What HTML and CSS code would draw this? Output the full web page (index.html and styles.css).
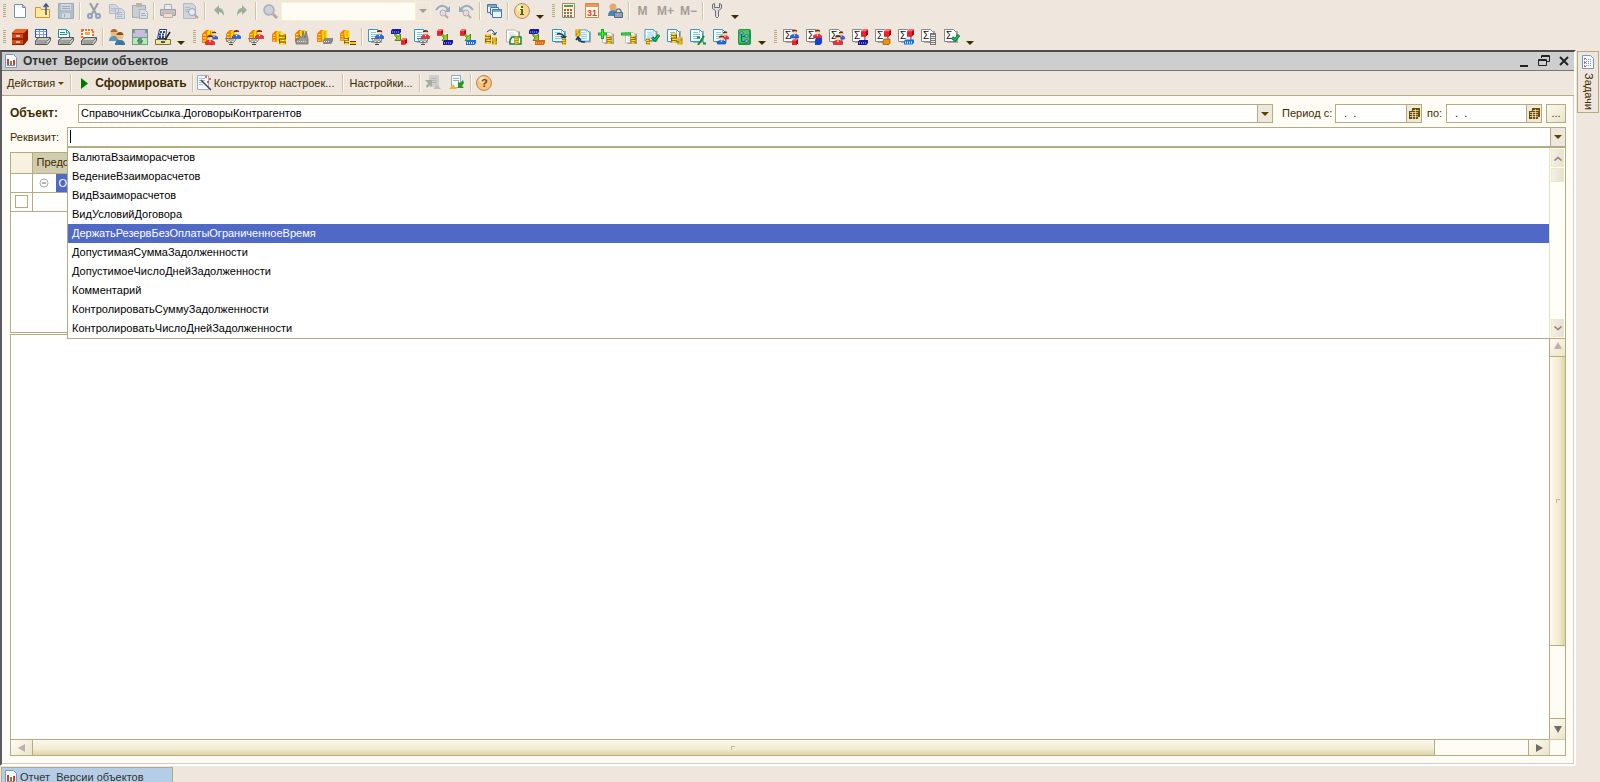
FILE: index.html
```html
<!DOCTYPE html>
<html lang="ru">
    <head>
        <meta charset="UTF-8" />
        <meta name="viewport" content="width=device-width, initial-scale=1.0" />
        <title>Отчет Версии объектов</title>
        <link rel="stylesheet" href="styles.css">
    </head>
    <body>
        <!-- shared icon parts -->
        <svg class="sprite" aria-hidden="true">
            <symbol id="ledger" viewBox="0 0 12 14">
                <path fill="#f08000" d="M0 5 4 1h7v9l-5 4H0z" />
                <path fill="#ffd800" d="M5 3 7 1h4v9l-5 4z" />
                <path stroke="#ffe880" d="M1 6h3M1 9h3M1 12h3" />
                <path stroke="#e09000" fill="none" d="M8.500 2v10" />
            </symbol>
            <symbol id="man-red" viewBox="0 0 10 10">
                <circle cx="5" cy="3" r="2.500" fill="#ffd8b0" />
                <path fill="#6b2a10" d="M2 2.500Q2 0 5 0t3 2.500L6 2z" />
                <path fill="#f03038" stroke="#b00818" stroke-width=".6" d="M0.500 9.500V7L3 5.500h4L9.500 7v2.500z" />
                <path fill="#fff" d="M4 5.500h2L5 7.500z" />
            </symbol>
            <symbol id="man-blue" viewBox="0 0 10 10">
                <circle cx="5" cy="3" r="2.500" fill="#ffd8b0" />
                <path fill="#6b2a10" d="M2 2.500Q2 0 5 0t3 2.500L6 2z" />
                <path fill="#2868e8" stroke="#0a2a9a" stroke-width=".6" d="M0.500 9.500V7L3 5.500h4L9.500 7v2.500z" />
                <path fill="#fff" d="M4 5.500h2L5 7.500z" />
            </symbol>
            <symbol id="basket" viewBox="0 0 12 7">
                <path fill="#f4f4f4" stroke="#555" stroke-width=".8" d="M.5.5h11l-3 4H3.500z" />
                <path stroke="#666" stroke-width=".6" fill="none" d="M3 1l4 3M6 1l3 2M9 1 5 4M6 1 3 3M6 4.500v2" />
                <path stroke="#444" d="M4 6.500h4" />
            </symbol>
            <symbol id="coins" viewBox="0 0 7 12">
                <path fill="#6a4c00" d="M0 1h7v10H0z" />
                <path stroke="#ffc810" stroke-width="2" d="M.5 1.500h6M0 4.500h6M1 7.500h6M.5 10.500h6" />
                <path stroke="#fff4a0" d="M2 1.500h2M1 4.500h2M3 7.500h2M2 10.500h2" />
            </symbol>
            <symbol id="paper" viewBox="0 0 14 14">
                <path fill="#aaa" d="M3 2h11v12H3z" />
                <path fill="#fff" stroke="#2a9cc8" d="M.5.5h9l3 3v9H.5z" />
                <path stroke="#80c8e4" d="M3 3.500h5M3 5.500h7M3 7.500h7M3 9.500h7M9.500 1v3" />
            </symbol>
            <symbol id="paper-gray" viewBox="0 0 14 14">
                <path fill="#999" d="M3 2h11v12H3z" />
                <path fill="#fff" stroke="#b4b4b4" d="M.5.5h9l3 3v9H.5z" />
                <path stroke="#ccc" d="M3 3.500h5M3 5.500h7M3 7.500h7M3 9.500h7" />
            </symbol>
            <symbol id="cube" viewBox="0 0 7 7">
                <path fill="#b00010" d="M0 2 2 0h5v5L5 7H0z" />
                <path fill="#f02028" d="M0 2h5v5H0z" />
                <path fill="#ff7070" d="M0 2 2 0h5L5 2z" />
            </symbol>
            <symbol id="shelf-blue" viewBox="0 0 10 5">
                <path fill="#1818a0" d="M0 1.500 1.500 0H10v3L8.500 5H0z" />
                <path stroke="#c0d0ff" stroke-dasharray="1 1" d="M1 3h7" />
            </symbol>
            <symbol id="shelf-light" viewBox="0 0 10 5">
                <path fill="#1870d8" d="M0 1.500 1.500 0H10v3L8.500 5H0z" />
                <path stroke="#d8f0ff" stroke-width="2" stroke-dasharray="1 1" d="M1 3h7" />
            </symbol>
            <symbol id="shelf-orange" viewBox="0 0 10 5">
                <path fill="#d86818" d="M0 1.500 1.500 0H10v3L8.500 5H0z" />
                <path stroke="#ffd0a0" stroke-dasharray="1 1" d="M1 3h7" />
            </symbol>
            <symbol id="arrow" viewBox="0 0 8 8">
                <path fill="#9ad020" stroke="#3c7000" stroke-width=".8" d="M1 .5 4 3.500 6.500 1v6.500H1L3 5 .5 2z" />
            </symbol>
            <symbol id="printer" viewBox="0 0 16 8">
                <path fill="#c8c8c8" stroke="#555" d="M.5 3.500 4 .5h11.500v3l-3 4H.5z" />
                <path stroke="#777" d="M1 4h11l3-3M2 6h9" fill="none" />
                <path stroke="#48b848" d="M10 5.500h2" />
            </symbol>
            <symbol id="sigma" viewBox="0 0 14 14">
                <path fill="#aaa" d="M3 2h11v12H3z" />
                <path fill="#fff" stroke="#888" d="M.5.500h9l3 3v9H.5z" />
                <text x="2" y="10" font-size="10" fill="#111">Σ</text>
            </symbol>
            <symbol id="check" viewBox="0 0 9 8">
                <path fill="none" stroke="#007038" stroke-width="3" d="M1 3.500 4 6l4-5" />
                <path fill="none" stroke="#10c060" stroke-width="1.500" d="M1 3.500 4 6l4-5" />
            </symbol>
            <symbol id="report" viewBox="0 0 12 14">
                <path fill="#f4faff" stroke="#7898b8" d="M.5.5h8l3 3v10H.5z" />
                <path fill="#e83030" d="M2 5h2v6H2z" />
                <path fill="#38a838" d="M5 7h2v4H5z" />
                <path fill="#e83030" d="M8 6h2v5H8z" />
                <path stroke="#7898b8" d="M2 11.500h8" />
            </symbol>
            <symbol id="calendar" viewBox="0 0 11 11">
                <path fill="#6b4e00" d="M3 0h8v9H9v2H0V3h3z" />
                <path stroke="#f4e8c8" d="M1 4.500h8M1 6.500h8M1 8.500h8M4 2.500h6M3.500 4v7M6.500 1v10" stroke-width=".7" />
            </symbol>
        </svg>

        <header class="toolbars">
            <div class="toolbar" role="toolbar" aria-label="Стандартная">
                <span class="grip"></span>
                <button class="tool" aria-label="Новый"><svg viewBox="0 0 16 16"><path fill="#fdfeff" stroke="#7890a8" d="M2.500 1.500h8l3 3v10h-11z" /><path fill="#c8dcf0" stroke="#7890a8" d="M10.500 1.500v3h3z" /></svg></button>
                <button class="tool" aria-label="Открыть"><svg viewBox="0 0 16 16"><path fill="#ffe8a0" stroke="#c89838" d="M.5 4.500h5l1 2h8v8H.5z" /><path fill="none" stroke="#385878" stroke-width="1.500" d="M11 12V2M8.500 4 11 1l2.500 3" /></svg></button>
                <button class="tool" aria-label="Сохранить" disabled><svg viewBox="0 0 16 16"><path fill="#9db0c4" stroke="#7f96ae" d="M.5.500h15v15H.5z" /><path fill="#c8d4e0" d="M3 1h10v6H3zM4 10h8v5H4z" /><path stroke="#7f96ae" d="M4 3.500h8M4 5.500h8M6.500 11v3" /></svg></button>
                <span class="sep"></span>
                <button class="tool" aria-label="Вырезать" disabled><svg viewBox="0 0 16 16"><path stroke="#788898" stroke-width="2" d="M4 0l6 11M12 0 6 11" /><g fill="none" stroke="#6888b8" stroke-width="2"><circle cx="4" cy="13" r="2" /><circle cx="12" cy="13" r="2" /></g></svg></button>
                <button class="tool" aria-label="Копировать" disabled><svg viewBox="0 0 16 16"><path fill="#c8d4e2" stroke="#9cacc4" d="M.5 1.500h6l3 3v6h-9zM6.500 5.500h6l3 3v7h-9z" /><path stroke="#9cacc4" d="M2 5.500h5M2 7.500h4M8 9.500h5M8 11.500h5M8 13.500h5" /></svg></button>
                <button class="tool" aria-label="Вставить" disabled><svg viewBox="0 0 16 16"><path fill="#bcc8d0" stroke="#8c98a8" d="M.5 2.500h13v12H.5z" /><path fill="#a8a890" d="M4 0h6v4H4z" /><path fill="#d4dce8" stroke="#8ca0b8" d="M7.500 6.500h5l3 3v6h-8z" /><path stroke="#8ca0b8" d="M9 10.500h4M9 12.500h5" /></svg></button>
                <span class="sep"></span>
                <button class="tool" aria-label="Печать" disabled><svg viewBox="0 0 16 16"><path fill="#e8ecf0" stroke="#8c98b0" d="M4.500 1.500h7v5h-7z" /><path fill="#b8b4b8" stroke="#888490" d="M.5 6.500h15v6H.5z" /><path fill="#f0dcd0" stroke="#b89888" d="M3.500 10.500h9v4h-9z" /></svg></button>
                <button class="tool" aria-label="Предварительный просмотр" disabled><svg viewBox="0 0 16 16"><path fill="#c8d0dc" stroke="#9cacc0" d="M.5.500h9l3 3v12H.5z" /><path stroke="#9cacc0" d="M2 4.500h5M2 6.500h4M2 8.500h3" /><circle cx="9" cy="9" r="3.500" fill="#e4eef4" stroke="#788ca4" /><path stroke="#b08470" stroke-width="2" d="m12 12 3 3" /></svg></button>
                <span class="sep"></span>
                <button class="tool" aria-label="Отменить" disabled><svg viewBox="0 0 16 16"><path fill="#7f9f86" d="m3 7 5-5v3q5 0 5 8-2-4-5-4v3z" /></svg></button>
                <button class="tool" aria-label="Повторить" disabled><svg viewBox="0 0 16 16"><path fill="#7f9f86" d="M13 7 8 2v3Q3 5 3 13q2-4 5-4v3z" /></svg></button>
                <span class="sep"></span>
                <button class="tool" aria-label="Найти" disabled><svg viewBox="0 0 16 16"><circle cx="7" cy="7" r="5" fill="#bccadc" stroke="#9098a8" stroke-width="1.500" /><path stroke="#b09088" stroke-width="3" d="m11 11 4 4" /></svg></button>
                <div class="search">
                    <input type="text" aria-label="Поиск" />
                    <button aria-label="История поиска"><i class="caret"></i></button>
                </div>
                <button class="tool" aria-label="Найти следующий" disabled><svg viewBox="0 0 16 16"><path fill="none" stroke="#8098b8" stroke-width="2" d="M1 7q6-8 12-1" /><path fill="#8098b8" d="M15 3v6H9z" /><circle cx="8" cy="10" r="3" fill="#d0dce8" stroke="#a89898" /><path stroke="#b09088" stroke-width="2" d="m10 12 3 3" /></svg></button>
                <button class="tool" aria-label="Найти предыдущий" disabled><svg viewBox="0 0 16 16"><path fill="none" stroke="#8098b8" stroke-width="2" d="M15 7Q9-1 3 6" /><path fill="#8098b8" d="M1 3v6h6z" /><circle cx="8" cy="10" r="3" fill="#d0dce8" stroke="#a89898" /><path stroke="#b09088" stroke-width="2" d="m10 12 3 3" /></svg></button>
                <span class="sep"></span>
                <button class="tool" aria-label="Окна"><svg viewBox="0 0 16 16"><g fill="#eaf4fc" stroke="#4878a0"><path d="M1.500 1.500h9v8h-9z" /><path d="M4.500 4.500h8v7h-8z" /><path d="M6.500 6.500h9v8h-9z" /></g><path stroke="#80a8c8" stroke-width="2" d="M2 3h8M7 8h8" /></svg></button>
                <span class="sep"></span>
                <button class="tool" aria-label="Справка"><svg viewBox="0 0 16 16"><circle cx="8" cy="8" r="7.500" fill="#ffd68c" stroke="#a89070" /><circle cx="6" cy="5" r="3" fill="#ffedc8" /><path fill="#38701c" d="M7 3h2v2H7zM6 6h3v5h1v1H6v-1h1V7H6z" /></svg></button>
                <button class="more" aria-label="Еще"></button>
                <span class="grip"></span>
                <button class="tool" aria-label="Калькулятор"><svg viewBox="0 0 16 16"><path fill="#f8f4dc" stroke="#988c70" d="M1.500.500h12v14h-12z" /><path fill="#609848" d="M3 2h9v2H3z" /><path stroke="#c05828" stroke-width="2" stroke-dasharray="2 1" d="M3 7h9" /><path stroke="#807850" stroke-width="2" stroke-dasharray="2 1" d="M3 10h9M3 13h9" /></svg></button>
                <button class="tool" aria-label="Календарь"><svg viewBox="0 0 16 16"><path fill="#fffaf0" stroke="#d08850" d="M1.500.500h13v14h-13z" /><path fill="#e89858" d="M2 1h12v3H2z" /><text x="3" y="13" font-size="9" font-weight="bold" fill="#e04020">31</text></svg></button>
                <button class="tool" aria-label="Блокировка пользователя"><svg viewBox="0 0 16 16"><circle cx="6" cy="4" r="3.500" fill="#e8a868" /><path fill="#4888b8" d="M1 13q0-6 5-6t5 6z" /><path fill="none" stroke="#708090" stroke-width="1.500" d="M9 9q0-3 2.500-3T14 9" /><path fill="#90a4b8" stroke="#506880" d="M7.500 9.500h8v5h-8z" /></svg></button>
                <span class="sep"></span>
                <button class="tool memory" disabled>M</button>
                <button class="tool memory" disabled>M+</button>
                <button class="tool memory" disabled>M−</button>
                <span class="sep"></span>
                <button class="tool" aria-label="Параметры"><svg viewBox="0 0 16 16"><path fill="#dcdcdc" stroke="#707070" d="M3.500 1.500v4l3 2v6q1.500 3 3 0v-6l3-2v-4l-2-1v4h-5v-4z" /></svg></button>
                <button class="more" aria-label="Еще"></button>
            </div>

            <div class="toolbar" role="toolbar" aria-label="Торговля">
                <span class="grip"></span>
                <button class="tool" aria-label="Картотека"><svg viewBox="0 0 16 16"><path fill="#902000" d="M0 4 4 0h12v11l-4 5H0z" /><path fill="#f06828" d="M0 4 4 0h12l-4 4z" /><path fill="#e04810" d="M0 5h11v4H0zM0 11h11v4H0z" /><path stroke="#ffe8c0" stroke-width="1.500" d="M4 7h4M4 13h4" /></svg></button>
                <button class="tool" aria-label="Печать таблицы"><svg viewBox="0 0 16 16"><path fill="#fff" stroke="#2050d0" d="M.5.500h11v8H.5z" /><path stroke="#7898e8" d="M1 2.500h10M1 5.500h10M4.500 1v7M8.500 1v7" /><use href="#printer" y="8" width="16" height="8" /></svg></button>
                <button class="tool" aria-label="Печать чека"><svg viewBox="0 0 16 16"><path fill="#fff" stroke="#189090" d="M.5.500h8l3 3v5H.5z" /><path stroke="#189090" d="M2 3.500h5M2 5.500h7M8.500 1v3h3" fill="none" /><use href="#printer" y="8" width="16" height="8" /></svg></button>
                <button class="tool" aria-label="Печать ценников"><svg viewBox="0 0 16 16"><path fill="#fff" stroke="#f07020" stroke-width="2" stroke-dasharray="2 1" d="M1 1h11v8H1z" /><path fill="#f8a060" d="M4 3h5v3H4z" /><use href="#printer" y="8" width="16" height="8" /></svg></button>
                <span class="sep"></span>
                <button class="tool" aria-label="Контрагенты"><svg viewBox="0 0 16 16"><circle cx="5" cy="4" r="3.500" fill="#f0b878" /><path fill="#a87030" d="M1.500 3Q2 0 5 0t3.500 3z" /><path fill="#5898b8" d="M0 12q0-5 5-5t5 5z" /><circle cx="11" cy="7" r="3.500" fill="#f0c088" /><path fill="#805020" d="M7.500 6q.5-3 3.500-3t3.500 3z" /><path fill="#3878a0" d="M6 16q0-5 5-5t5 5z" /></svg></button>
                <button class="tool" aria-label="Деньги"><svg viewBox="0 0 16 16"><path fill="#70a088" d="M0 0h16v16H0z" /><path fill="#c8bce0" d="M3 1h10v3H3zM1 4h14v4H1z" /><path fill="#b8e8b8" d="M1 9h14v6H1z" /><path fill="none" stroke="#408060" stroke-width="1.500" d="M10 10H7l-1 2h4l-1 2H6" /></svg></button>
                <button class="tool" aria-label="Касса"><svg viewBox="0 0 16 16"><path fill="#f0e8a0" stroke="#787040" d="M.5 10.500h15v5H.5z" /><path fill="#fff" stroke="#203878" d="M4.500.500h7l-1 9h-8z" /><path stroke="#2040a0" stroke-width="2" stroke-dasharray="2 1" d="M5 3h6M4 5.500h6M4 8h6" /><path stroke="#222" stroke-width="1.500" d="m15 3-5 8M6 13h4" /></svg></button>
                <button class="more" aria-label="Еще"></button>
                <span class="grip"></span>
                <button class="tool" aria-label="Реализация"><svg viewBox="0 0 16 16"><use href="#ledger" width="12" height="14" /><use href="#man-blue" x="8" y="2" width="8" height="9" /><use href="#man-red" x="3" y="6" width="10" height="10" /></svg></button>
                <button class="tool" aria-label="Заказ покупателя"><svg viewBox="0 0 16 16"><use href="#ledger" x="1" width="11" height="13" /><use href="#man-blue" x="7" y="1" width="9" height="9" /><use href="#basket" y="9" width="12" height="7" /></svg></button>
                <button class="tool" aria-label="Заказ поставщику"><svg viewBox="0 0 16 16"><use href="#ledger" x="1" width="11" height="13" /><use href="#man-red" x="7" y="1" width="9" height="9" /><use href="#basket" y="9" width="12" height="7" /></svg></button>
                <button class="tool" aria-label="Деньги по складам"><svg viewBox="0 0 16 16"><use href="#ledger" x="1" y="1" width="10" height="12" /><use href="#coins" x="8" y="4" width="7" height="12" /></svg></button>
                <button class="tool" aria-label="Производство"><svg viewBox="0 0 16 16"><use href="#ledger" x="1" width="11" height="13" /><path fill="#999" stroke="#666" stroke-width=".7" d="M2 10h3V6l3 3 1-7 2 7 1-7 2 8v5H2z" /><path stroke="#ddd" stroke-dasharray="1 1" d="M3 12.500h10" /></svg></button>
                <button class="tool" aria-label="Склад"><svg viewBox="0 0 16 16"><use href="#ledger" width="11" height="13" /><path fill="#888" d="m6 11 2-2h8v3l-2 3H6z" /><path stroke="#eee" stroke-dasharray="1 1" d="M7 12.500h6" /></svg></button>
                <button class="tool" aria-label="Затраты"><svg viewBox="0 0 16 16"><use href="#ledger" width="10" height="12" /><use href="#coins" x="4" y="7" width="5" height="9" /><path stroke="#5a4000" stroke-width="4" d="M10 14h6" /><path stroke="#ffc810" stroke-width="2" d="M10 14h6" /></svg></button>
                <span class="sep"></span>
                <button class="tool" aria-label="Отчет по покупателям"><svg viewBox="0 0 16 16"><use href="#paper" width="14" height="14" /><use href="#man-blue" x="7" y="1" width="9" height="9" /><use href="#basket" x="3" y="9" width="12" height="7" /></svg></button>
                <button class="tool" aria-label="Отгрузка"><svg viewBox="0 0 16 16"><use href="#shelf-blue" width="10" height="5" /><use href="#arrow" x="3" y="4" width="8" height="8" /><use href="#cube" x="10" y="9" width="6" height="7" /></svg></button>
                <button class="tool" aria-label="Отчет по поставщикам"><svg viewBox="0 0 16 16"><use href="#paper" width="14" height="14" /><use href="#man-red" x="7" y="1" width="9" height="9" /><use href="#basket" x="3" y="9" width="12" height="7" /></svg></button>
                <button class="tool" aria-label="Поступление"><svg viewBox="0 0 16 16"><use href="#cube" width="6" height="7" /><use href="#arrow" x="4" y="4" width="8" height="8" /><use href="#shelf-blue" x="6" y="11" width="10" height="5" /></svg></button>
                <button class="tool" aria-label="Перемещение"><svg viewBox="0 0 16 16"><use href="#cube" width="6" height="7" /><use href="#arrow" x="4" y="4" width="8" height="8" /><use href="#shelf-light" x="6" y="11" width="10" height="5" /></svg></button>
                <button class="tool" aria-label="Перевод денег"><svg viewBox="0 0 16 16"><use href="#coins" x="2" y="4" width="6" height="12" /><use href="#coins" x="9" y="8" width="5" height="8" /><path fill="none" stroke="#204878" d="M4 3q5-5 8 2M9.500 4.500 12 6l1.500-3" /></svg></button>
                <button class="tool" aria-label="Платежный документ"><svg viewBox="0 0 16 16"><use href="#paper-gray" width="14" height="15" /><path fill="#fff" stroke="#108828" stroke-width="1.500" d="M6 8h9v7H4v-4z" /><use href="#coins" x="8" y="8" width="5" height="7" /></svg></button>
                <button class="tool" aria-label="Передача"><svg viewBox="0 0 16 16"><use href="#shelf-blue" width="10" height="5" /><use href="#arrow" x="3" y="4" width="8" height="8" /><use href="#shelf-orange" x="6" y="11" width="10" height="5" /></svg></button>
                <button class="tool" aria-label="Расход"><svg viewBox="0 0 16 16"><use href="#paper" width="14" height="14" /><path fill="none" stroke="#103868" stroke-width="1.500" d="M5 5q7-1 7 4M9 7l3 3 2-3" /><use href="#coins" x="9" y="9" width="6" height="7" /></svg></button>
                <button class="tool" aria-label="Приход"><svg viewBox="0 0 16 16"><use href="#paper" x="3" width="13" height="14" /><use href="#coins" width="6" height="8" /><path fill="none" stroke="#103868" stroke-width="1.500" d="M10 13q-7 0-7-4M1 11l2-3 3 3" /></svg></button>
                <button class="tool" aria-label="Добавить"><svg viewBox="0 0 16 16"><use href="#paper-gray" x="4" y="2" width="12" height="14" /><use href="#coins" x="8" y="6" width="6" height="9" /><path stroke="#10a820" stroke-width="3" d="M0 5h9M4.500 0v10" /><path stroke="#50e850" d="M1 5h7M4.500 1v8" /></svg></button>
                <button class="tool" aria-label="Списать"><svg viewBox="0 0 16 16"><use href="#paper-gray" x="4" y="2" width="12" height="14" /><use href="#coins" x="9" y="6" width="6" height="9" /><path stroke="#10a820" stroke-width="3" d="M0 5h10" /><path stroke="#50e850" d="M1 5h8" /></svg></button>
                <button class="tool" aria-label="Утвердить"><svg viewBox="0 0 16 16"><use href="#paper" width="14" height="13" /><use href="#coins" x="1" y="9" width="6" height="7" /><use href="#check" x="7" y="5" width="9" height="8" /></svg></button>
                <button class="tool" aria-label="Ведомость"><svg viewBox="0 0 16 16"><use href="#paper" width="14" height="14" /><use href="#coins" x="4" y="3" width="6" height="12" /><use href="#coins" x="10" y="8" width="6" height="8" /></svg></button>
                <button class="tool" aria-label="Скидки"><svg viewBox="0 0 16 16"><use href="#paper" width="14" height="14" /><path stroke="#109030" stroke-width="2" d="m14 7-6 9M7 8.500h3M13 14.500h3" /></svg></button>
                <button class="tool" aria-label="Взаиморасчеты"><svg viewBox="0 0 16 16"><use href="#paper" width="14" height="14" /><use href="#man-red" x="8" y="2" width="8" height="9" /><use href="#man-blue" x="4" y="6" width="9" height="10" /></svg></button>
                <button class="tool" aria-label="Структура"><svg viewBox="0 0 16 16"><rect x="2" width="13" height="16" rx="2" fill="#209840" /><rect x="3" y="1" width="10" height="13" rx="1" fill="#48c860" /><path fill="none" stroke="#145890" d="M5.500 4v8.500H10M5.500 7.500H10" /><path fill="#d8f0ff" stroke="#145890" stroke-width=".8" d="M4 3h3v2H4zM9 6h3v2H9zM9 11h3v2H9z" /></svg></button>
                <button class="more" aria-label="Еще"></button>
                <span class="grip"></span>
                <button class="tool" aria-label="Итоги продаж"><svg viewBox="0 0 16 16"><use href="#sigma" width="14" height="14" /><use href="#man-blue" x="7" width="9" height="10" /><use href="#cube" x="9" y="10" width="6" height="6" /></svg></button>
                <button class="tool" aria-label="Итоги закупок"><svg viewBox="0 0 16 16"><use href="#sigma" width="14" height="14" /><use href="#man-red" x="7" width="9" height="10" /><path fill="#1840d0" d="m9 11 1-2h6v5l-2 2H9z" /></svg></button>
                <button class="tool" aria-label="Итоги по контрагентам"><svg viewBox="0 0 16 16"><use href="#sigma" width="14" height="14" /><use href="#man-blue" x="8" y="2" width="8" height="9" /><use href="#man-red" x="4" y="6" width="10" height="10" /></svg></button>
                <button class="tool" aria-label="Итоги по складу"><svg viewBox="0 0 16 16"><use href="#sigma" width="14" height="14" /><use href="#cube" x="9" width="7" height="8" /><use href="#shelf-blue" x="6" y="11" width="10" height="5" /></svg></button>
                <button class="tool" aria-label="Итоги по рознице"><svg viewBox="0 0 16 16"><use href="#sigma" width="14" height="14" /><use href="#cube" x="9" width="7" height="8" /><path fill="#f09010" stroke="#905000" stroke-width=".7" d="m8 12 1-2h6v4l-1 1.500H8z" /></svg></button>
                <button class="tool" aria-label="Итоги по партиям"><svg viewBox="0 0 16 16"><use href="#sigma" width="14" height="14" /><use href="#cube" x="9" width="7" height="8" /><use href="#shelf-light" x="6" y="10" width="10" height="6" /></svg></button>
                <button class="tool" aria-label="Итоги по ценам"><svg viewBox="0 0 16 16"><use href="#sigma" width="14" height="14" /><path fill="#777" d="M9 4h6v12H9z" /><path stroke="#eee" d="M10 6.500h4M10 8.500h4M10 10.500h4M10 12.500h4M10 14.500h4" /></svg></button>
                <button class="tool" aria-label="Проверка итогов"><svg viewBox="0 0 16 16"><use href="#sigma" width="14" height="14" /><use href="#check" x="7" y="5" width="9" height="8" /></svg></button>
                <button class="more" aria-label="Еще"></button>
            </div>
        </header>

        <div class="workspace">
            <main class="window">
                <div class="titlebar">
                    <svg class="title-icon" viewBox="0 0 12 14"><use href="#report" /></svg>
                    <h1>Отчет&nbsp; Версии объектов</h1>
                    <div class="window-buttons">
                        <button aria-label="Свернуть"><svg viewBox="0 0 12 12"><path stroke="#222" stroke-width="2" d="M2 11h8" /></svg></button>
                        <button aria-label="Восстановить"><svg viewBox="0 0 12 12"><path fill="none" stroke="#222" d="M3.500 3V.500h8v6H9M3 1.500h9M.500 4.500h8v6h-8zM0 5.500h9" /></svg></button>
                        <button aria-label="Закрыть"><svg viewBox="0 0 12 12"><path stroke="#222" stroke-width="2" d="m2 2 8 8m0-8-8 8" /></svg></button>
                    </div>
                </div>

                <div class="commands">
                    <button class="command">Действия <i class="caret small"></i></button>
                    <span class="sep"></span>
                    <button class="command run"><svg class="play" viewBox="0 0 7 11"><path fill="#007800" d="M0 0l7 5.500L0 11z" /></svg>Сформировать</button>
                    <span class="sep"></span>
                    <button class="command wizard"><svg viewBox="0 0 16 16"><path fill="#f4f8fc" stroke="#98b0c8" d="M1.500.500h11v14h-11z" /><path stroke="#a8bccc" d="M3 3.500h6M3 5.500h6M3 7.500h4M3 9.500h4" /><path stroke="#404858" stroke-width="1.500" d="m5 5 10 10" /><path stroke="#e83030" stroke-width="1.500" d="M9 2h2M13 4h2M11 7h2" /></svg>Конструктор настроек...</button>
                    <span class="sep"></span>
                    <button class="command">Настройки...</button>
                    <span class="sep"></span>
                    <button class="tool" aria-label="Восстановить значения" disabled><svg viewBox="0 0 16 16"><path fill="#c4c8cc" d="M4 0h10v12H4z" /><path stroke="#a0a8b0" d="M6 3.500h6M6 5.500h6M6 7.500h6" /><path fill="#8a9a90" d="M0 5h7v7L5 10l-3 3-1-2 2-3z" /><path fill="#b8b0a4" d="m8 14 4-4 4 4z" /></svg></button>
                    <button class="tool" aria-label="Сохранить значения"><svg viewBox="0 0 16 16"><path fill="#f4faff" stroke="#90a8c0" d="M3.500.500h9v12h-9z" /><path stroke="#90a8c0" d="M5 3.500h6M5 5.500h6" /><path fill="#289820" d="m15 5-3 3-2-2v7h6l-2-2 2-3z" /><path fill="#e8b838" d="m1 14 4-5 4 5z" /></svg></button>
                    <span class="sep"></span>
                    <button class="tool" aria-label="Справка"><svg viewBox="0 0 16 16"><circle cx="8" cy="8" r="7.500" fill="#ffc478" stroke="#a88868" /><circle cx="6" cy="5" r="3" fill="#ffe4c0" /><text x="5" y="12" font-size="11" font-weight="bold" fill="#704018">?</text></svg></button>
                </div>

                <div class="content">
                    <form class="filters">
                        <div class="row">
                            <label class="object-label" for="object">Объект:</label>
                            <div class="field grow">
                                <input type="text" id="object" value="СправочникСсылка.ДоговорыКонтрагентов" />
                                <button type="button" aria-label="Выбрать объект"><i class="caret"></i></button>
                            </div>
                            <label class="from-label" for="from">Период с:</label>
                            <div class="field from">
                                <input type="text" id="from" value="  .  ." />
                                <button type="button" aria-label="Календарь"><svg viewBox="0 0 11 11"><use href="#calendar" /></svg></button>
                            </div>
                            <label class="to-label" for="to">по:</label>
                            <div class="field to">
                                <input type="text" id="to" value="  .  ." />
                                <button type="button" aria-label="Календарь"><svg viewBox="0 0 11 11"><use href="#calendar" /></svg></button>
                            </div>
                            <button type="button" class="dots">...</button>
                        </div>
                        <div class="row">
                            <label for="attribute">Реквизит:</label>
                            <div class="field combo grow">
                                <span class="cursor"></span>
                                <input type="text" id="attribute" role="combobox" aria-expanded="true" aria-controls="attributes" />
                                <button type="button" aria-label="Выбрать реквизит"><i class="caret"></i></button>
                                <div class="popup">
                                    <ul id="attributes" role="listbox">
                                        <li role="option">ВалютаВзаиморасчетов</li>
                                        <li role="option">ВедениеВзаиморасчетов</li>
                                        <li role="option">ВидВзаиморасчетов</li>
                                        <li role="option">ВидУсловийДоговора</li>
                                        <li role="option" aria-selected="true" class="selected">ДержатьРезервБезОплатыОграниченноеВремя</li>
                                        <li role="option">ДопустимаяСуммаЗадолженности</li>
                                        <li role="option">ДопустимоеЧислоДнейЗадолженности</li>
                                        <li role="option">Комментарий</li>
                                        <li role="option">КонтролироватьСуммуЗадолженности</li>
                                        <li role="option">КонтролироватьЧислоДнейЗадолженности</li>
                                    </ul>
                                    <div class="popup-scroll">
                                        <span class="step"><svg viewBox="0 0 8 5"><path fill="none" stroke="#94805c" stroke-width="1.500" d="m.5 4.500 3.500-3 3.500 3" /></svg></span>
                                        <span class="thumb"></span>
                                        <span class="step last"><svg viewBox="0 0 8 5"><path fill="none" stroke="#94805c" stroke-width="1.500" d="m.5.500 3.500 3 3.500-3" /></svg></span>
                                    </div>
                                </div>
                            </div>
                        </div>
                    </form>

                    <div class="settings">
                        <table>
                            <thead>
                                <tr><th class="mark"></th><th>Представление</th></tr>
                            </thead>
                            <tbody>
                                <tr>
                                    <td class="mark"></td>
                                    <td class="tree"><div class="node"><svg viewBox="0 0 10 10"><circle cx="5" cy="5" r="4" fill="#fff" stroke="#aaa" /><path stroke="#666" d="M3 5h4" /></svg><span class="chosen">Отбор</span></div></td>
                                </tr>
                                <tr>
                                    <td class="mark"><input type="checkbox" aria-label="Использовать" /></td>
                                    <td></td>
                                </tr>
                            </tbody>
                        </table>
                    </div>

                    <div class="result">
                        <div class="sheet"></div>
                        <div class="scroll vertical">
                            <span class="end"><i class="up"></i></span>
                            <span class="thumb"><i class="notch"></i></span>
                            <span class="track"></span>
                            <span class="end"><i class="down"></i></span>
                        </div>
                        <div class="scroll horizontal">
                            <span class="end"><i class="left"></i></span>
                            <span class="thumb"><i class="notch"></i></span>
                            <span class="track"></span>
                            <span class="end"><i class="right"></i></span>
                        </div>
                        <div class="corner"></div>
                    </div>
                </div>
            </main>

            <aside class="side">
                <button class="side-tab">
                    <svg viewBox="0 0 12 14"><path fill="#f4f8ff" stroke="#7898c0" d="M.5.500h8l3 3v10H.5z" /><path stroke="#7898c0" stroke-dasharray="1 1" d="M2 4.500h8M2 6.500h8M2 8.500h8M2 10.500h8" /><path stroke="#d05050" d="M2 3.500h2M2 7.500h2M2 11.500h2" /></svg>
                    <span>Задачи</span>
                </button>
            </aside>
        </div>

        <footer class="taskbar">
            <button class="task"><svg viewBox="0 0 12 14"><use href="#report" /></svg>Отчет&nbsp; Версии объектов</button>
        </footer>
    </body>
</html>
```
FILE: styles.css
```css
* {
    box-sizing: border-box;
}
body {
    display: flex;
    flex-direction: column;
    height: 100vh;
    margin: 0;
    overflow: hidden;
    background: #efe6de;
    color: #3c2c00;
    font-family: "Liberation Sans", Arial, sans-serif;
    font-size: 11px;
    line-height: 13px;
}
button,
input {
    margin: 0;
    padding: 0;
    border: 0;
    border-radius: 0;
    background: none;
    color: inherit;
    font: inherit;
    outline: none;
}
svg {
    display: block;
    flex: none;
}
.sprite {
    position: absolute;
    width: 0;
    height: 0;
}
.caret {
    display: inline-block;
    border: 4px solid transparent;
    border-top-color: #5c4400;
    border-bottom: 0;
}
.caret.small {
    margin-left: 1px;
    border-width: 3px 3px 0;
    vertical-align: 2px;
}

/* toolbars */
.toolbar {
    display: flex;
    align-items: center;
    height: 22px;
}
.toolbar + .toolbar {
    height: 28px;
    padding-top: 2px;
}
.grip {
    width: 8px;
    height: 14px;
    background: repeating-linear-gradient(#b5ab80 0 1px, transparent 1px 2px) 3px 0 / 3px 14px no-repeat;
}
.tool {
    display: flex;
    align-items: center;
    justify-content: center;
    width: 23px;
    height: 20px;
}
.tool svg {
    width: 16px;
    height: 16px;
}
.tool:disabled svg {
    opacity: 0.75;
}
.memory {
    color: #a89c98;
    font-size: 12px;
    font-weight: bold;
}
.sep {
    width: 2px;
    height: 18px;
    margin: 0 1px 0 2px;
    background: linear-gradient(90deg, #d0c4a4 50%, #fffaf0 50%);
}
.more {
    display: flex;
    justify-content: center;
    width: 14px;
    height: 20px;
    margin-right: 2px;
    padding-top: 14px;
}
.more::after {
    content: "";
    width: 0;
    border: 4px solid transparent;
    border-top-color: #3c2c00;
    border-bottom: 0;
}
.search {
    display: flex;
    width: 150px;
    height: 19px;
    border: 1px solid #f8f0cc;
}
.search input {
    flex: 1;
    min-width: 0;
    background: #fffcf6;
}
.search button {
    display: flex;
    align-items: center;
    justify-content: center;
    width: 15px;
    border-left: 1px solid #f8f0cc;
}
.search .caret {
    border-top-color: #a89c88;
}

/* report window */
.workspace {
    display: flex;
    flex: 1;
    min-height: 0;
}
.window {
    display: flex;
    flex: 1;
    flex-direction: column;
    border: 2px solid #fff;
    border-top-color: #4c4c50;
    border-left-color: #5c5c60;
    box-shadow: inset -1px -1px #d0ccc8;
    background: #fffcf6;
}
.titlebar {
    display: flex;
    align-items: center;
    height: 19px;
    padding: 0 2px 0 3px;
    border-bottom: 1px solid #77777a;
    background: #cecece;
}
.title-icon {
    width: 12px;
    height: 14px;
}
.titlebar h1 {
    margin: 0 auto 0 6px;
    color: #333;
    font-size: 12px;
    font-weight: bold;
}
.window-buttons {
    display: flex;
    gap: 8px;
    padding-right: 2px;
}
.window-buttons svg {
    width: 12px;
    height: 12px;
}
.commands {
    display: flex;
    align-items: center;
    height: 25px;
    padding-left: 1px;
    border-bottom: 1px solid #b5ab80;
    background: #efe6de;
}
.command {
    display: flex;
    align-items: center;
    gap: 2px;
    height: 20px;
    padding: 0 4px;
    white-space: nowrap;
}
.command svg {
    width: 16px;
    height: 16px;
}
.run {
    gap: 7px;
    padding: 0 3px 0 8px;
    font-size: 12px;
    font-weight: bold;
}
.wizard {
    padding: 0 6px 0 1px;
}
.command .play {
    width: 7px;
    height: 11px;
}
.content {
    display: flex;
    flex: 1;
    flex-direction: column;
    min-height: 0;
    padding: 8px;
}

/* filters */
.filters {
    display: flex;
    flex-direction: column;
    gap: 4px;
}
.row {
    display: flex;
    align-items: center;
}
.row label {
    white-space: nowrap;
}
.row .object-label {
    width: 68px;
    font-size: 12px;
    font-weight: bold;
}
.row label[for="attribute"] {
    width: 57px;
}
.from-label {
    width: 62px;
    padding-left: 9px;
}
.to-label {
    width: 24px;
    padding-left: 5px;
}
.field {
    display: flex;
    width: 87px;
    height: 19px;
    border: 1px solid #b5ab80;
    background: #fff;
}
.field.to {
    width: 96px;
}
.field.grow {
    flex: 1;
    width: auto;
}
.field input {
    flex: 1;
    min-width: 0;
    padding-left: 2px;
    color: #000;
}
.field button {
    display: flex;
    align-items: center;
    justify-content: center;
    width: 15px;
    border-left: 1px solid #b5ab80;
    background: #efe6de;
}
.field button svg {
    width: 11px;
    height: 11px;
}
.dots {
    width: 20px;
    height: 19px;
    margin-left: 4px;
    border: 1px solid #b5ab80;
    background: linear-gradient(135deg, #fbf8ec, #ebe3cc);
}
.field.combo {
    position: relative;
    height: 21px;
    border-bottom-width: 2px;
}
.cursor {
    width: 1px;
    height: 13px;
    margin: 2px 0 0 2px;
    background: #000;
}
.popup {
    position: absolute;
    z-index: 1;
    top: 100%;
    right: -1px;
    left: -1px;
    display: flex;
    margin-top: 2px;
    border: 1px solid #b5ab80;
    border-top: 0;
    background: #fff;
    color: #000;
}
.popup ul {
    flex: 1;
    margin: 0;
    padding: 0;
    list-style: none;
}
.popup li {
    padding: 0 4px;
    line-height: 19px;
}
.popup .selected {
    background: #5069c6;
    color: #fff;
}
.popup-scroll {
    display: flex;
    flex-direction: column;
    gap: 1px;
    width: 16px;
    padding: 1px;
    border-left: 1px solid #e4e0cc;
    background: #fffef8;
}
.popup-scroll .step,
.popup-scroll .thumb {
    display: flex;
    align-items: center;
    justify-content: center;
    height: 18px;
    border: 1px solid #f0e8c0;
    background: linear-gradient(90deg, #f4f0e4, #e8e0d8);
}
.popup-scroll .thumb {
    height: 14px;
}
.popup-scroll svg {
    width: 8px;
    height: 5px;
}
.popup-scroll .last {
    margin-top: auto;
}

/* settings table */
.settings {
    height: 181px;
    margin-top: 4px;
    border: 1px solid #b5ab80;
    background: #fff;
}
.settings table {
    width: 100%;
    border-collapse: collapse;
    table-layout: fixed;
}
.settings th,
.settings td {
    height: 19px;
    padding: 0;
    border-bottom: 1px solid #b5ab80;
}
.settings th {
    height: 20px;
    padding-left: 4px;
    background: #d0ccb0;
    font-weight: normal;
    text-align: left;
}
.settings .mark {
    width: 21px;
    border-right: 1px solid #b5ab80;
}
.settings th.mark {
    background: #f8f0e0;
}
.node {
    display: flex;
    align-items: center;
    gap: 7px;
    padding-left: 6px;
}
.node svg {
    width: 10px;
    height: 10px;
}
.chosen {
    padding: 0 3px;
    background: #5069c6;
    color: #fff;
    line-height: 18px;
}
.settings input {
    display: block;
    width: 13px;
    height: 13px;
    margin-left: 4px;
    border: 1px solid #b5ab80;
    appearance: none;
}

/* result sheet with its scroll bars */
.result {
    display: grid;
    flex: 1;
    grid-template: 1fr 16px / 1fr 16px;
    min-height: 0;
    margin-top: 1px;
    border: 1px solid #b5ab80;
    background: #fffcf6;
}
.sheet {
    background: #fff;
}
.scroll {
    display: flex;
}
.scroll .end,
.scroll .thumb {
    display: flex;
    align-items: center;
    justify-content: center;
}
.scroll .end {
    flex: 0 0 21px;
    background: linear-gradient(135deg, #fffcf4, #ece4c8);
}
.notch {
    width: 4px;
    height: 4px;
    border: solid #c4b890;
    border-width: 1px 0 0 1px;
}
.vertical {
    flex-direction: column;
    border-left: 1px solid #b5ab80;
}
.vertical .thumb {
    flex: 4;
    border: solid #b5ab80;
    border-width: 1px 0;
    background: linear-gradient(90deg, #fbf8ee, #f4ecd0 60%, #dcd4a8);
}
.vertical .track {
    flex: 1;
}
.vertical .end:last-child {
    border-top: 1px solid #b5ab80;
}
.horizontal {
    border-top: 1px solid #b5ab80;
}
.horizontal .thumb {
    flex: 15;
    border: solid #b5ab80;
    border-width: 0 1px;
    background: linear-gradient(#fbf8ee, #f4ecd0 60%, #dcd4a8);
}
.horizontal .track {
    flex: 1;
}
.horizontal .end:last-child {
    border-left: 1px solid #b5ab80;
}
.corner {
    border: solid #d0c8a8;
    border-width: 1px 0 0 1px;
}
.up,
.down,
.left,
.right {
    border: 4px solid transparent;
}
.up {
    border-top: 0;
    border-bottom: 7px solid #b8b4ac;
}
.down {
    border-top: 7px solid #706c6c;
    border-bottom: 0;
}
.left {
    border-right: 7px solid #b8b4ac;
    border-left: 0;
}
.right {
    border-right: 0;
    border-left: 7px solid #706c6c;
}

/* side panel and open windows */
.side {
    width: 24px;
    padding-top: 1px;
}
.side-tab {
    display: flex;
    flex-direction: column;
    align-items: center;
    gap: 4px;
    width: 22px;
    height: 62px;
    margin-left: 1px;
    padding-top: 3px;
    border: 1px solid #b5ab80;
}
.side-tab svg {
    width: 12px;
    height: 14px;
}
.side-tab span {
    writing-mode: vertical-rl;
}
.taskbar {
    height: 16px;
    padding: 1px 0 0 1px;
    overflow: hidden;
}
.task {
    display: flex;
    align-items: center;
    gap: 3px;
    width: 172px;
    height: 20px;
    padding-left: 3px;
    border: 1px solid #b5ab80;
    background: #b5cde6;
    color: #333;
}
.task svg {
    width: 12px;
    height: 14px;
}
```
